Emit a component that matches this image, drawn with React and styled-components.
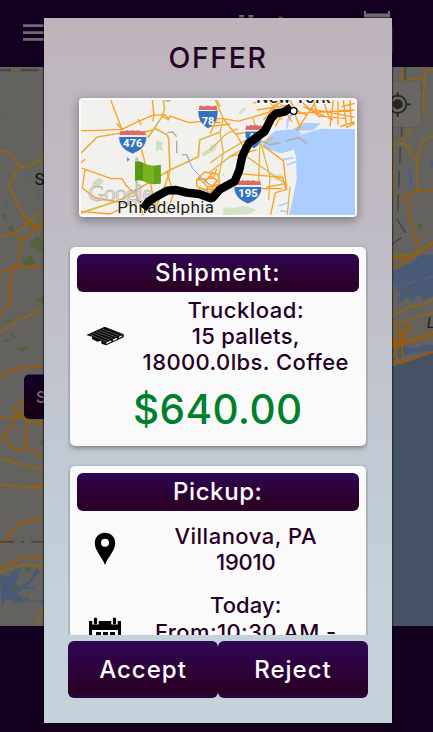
import React from "react";
import styled, { createGlobalStyle } from "styled-components";

const GlobalStyle = createGlobalStyle`
  * { box-sizing: border-box; }
  html, body { margin: 0; padding: 0; }
  body { width: 433px; height: 732px; overflow: hidden; background: #130020; }
`;

const Screen = styled.main`
  position: relative;
  width: 433px;
  height: 732px;
  overflow: hidden;
  display: flex;
  flex-direction: column;
  background: #130020;
  font-family: Inter, "Open Sans", sans-serif;
`;

const TopBar = styled.header`
  flex: 0 0 67px;
  background: #130021;
  border-bottom: 1px solid #0e0018;
`;

const BackMap = styled.section`
  flex: 0 0 559px;
  background: #64625f;
`;

const BottomBar = styled.footer`
  flex: 1;
  background: linear-gradient(#130020, #13001c);
`;

const Drawing = styled.svg`
  display: block;
`;

const Modal = styled.section`
  position: absolute;
  left: 44px;
  top: 18px;
  width: 348px;
  height: 705px;
  padding: 0 24px;
  display: flex;
  flex-direction: column;
  background: linear-gradient(#beb4bc, #c0bdc6 35%, #c1cad3 65%, #c3d3d9 85%, #c3d3d9);
  box-shadow: 0 0 1px 1px rgba(0, 0, 0, 0.45);
`;

const Title = styled.h1`
  margin: 0;
  height: 80px;
  line-height: 80px;
  text-align: center;
  font-size: 28.5px;
  font-weight: 500;
  letter-spacing: ${(p) => p.$track}px;
  color: #260026;
`;

const MapCard = styled.div`
  flex: none;
  align-self: center;
  width: 278px;
  height: 119px;
  padding: 2px;
  background: #fafafa;
  border-radius: 4px;
  box-shadow: 0 3px 10px 1px rgba(0, 0, 0, 0.32);
`;

const ScrollArea = styled.div`
  flex: none;
  height: 418px;
  margin-bottom: 5.5px;
  padding: 30px 2.5px 0 2px;
  overflow: hidden;
  display: flex;
  flex-direction: column;
  gap: 19.5px;
`;

const Card = styled.article`
  flex: 0 0 ${(p) => p.$height}px;
  padding: 7px;
  border-radius: 5px;
  background: #fafafa;
  box-shadow: 0 2px 5px rgba(0, 0, 0, 0.36);
`;

const CardTitle = styled.h2`
  margin: 0;
  height: 38px;
  line-height: 38px;
  border-radius: 6px;
  text-align: center;
  font-size: 24px;
  font-weight: 500;
  letter-spacing: ${(p) => p.$track}px;
  color: #fff;
  background: linear-gradient(#2e0553, #2c0024 88%, #2b0435);
`;

const InfoRow = styled.div`
  display: grid;
  grid-template-columns: 56px 1fr;
  align-items: center;
  margin-top: ${(p) => p.$gap}px;
`;

const IconCell = styled.div`
  display: flex;
  justify-content: center;
  padding-top: ${(p) => p.$drop || 0}px;
`;

const Lines = styled.div`
  display: flex;
  flex-direction: column;
  align-items: center;
  align-self: start;
`;

const Line = styled.span`
  height: 26.4px;
  line-height: 26.4px;
  white-space: nowrap;
  font-size: 22px;
  font-weight: 450;
  letter-spacing: ${(p) => p.$track || 0}px;
  color: #260026;
`;

const Price = styled.div`
  margin-top: 5px;
  height: 58px;
  line-height: 58px;
  text-align: center;
  font-size: 40.5px;
  font-weight: 500;
  letter-spacing: ${(p) => p.$track}px;
  color: #00802b;
`;

const Actions = styled.div`
  display: grid;
  grid-template-columns: 1fr 1fr;
  height: 57px;
`;

const ActionButton = styled.button`
  border: 0;
  padding: 0;
  border-radius: 6px;
  font: 500 24px Inter, sans-serif;
  letter-spacing: ${(p) => p.$track}px;
  color: #fff;
  background: linear-gradient(#2f0655, #2b0024 90%, #2a0640);
`;

const HeaderArt = () => (
  <Drawing width="433" height="66">
    <path d="M23 25.6h26M23 32.6h26M23 39.4h26" stroke="#706c73" strokeWidth="2.6" />
    <text x="197" y="39" fontSize="32" fontWeight="700" fill="#706c73" letterSpacing="0.6">pallet</text>
    <path d="M364 11h2v2.5h22V11h2v50h-26z" fill="#706c73" />
    <path d="M392.500 26v28" stroke="#403545" />
  </Drawing>
);

const Y = "#87671d";
const O = "#99590b";

const RegionMap = () => (
  <Drawing width="433" height="559" viewBox="0 0 433 559">
    <g transform="translate(0 -7) scale(.33333)" fill="none" strokeWidth="6">
      <path d="M0 31h40M62 31h54" stroke="#454442" />
      <path d="M36 20v13" stroke={Y} />
      <path d="M0 160l8 3-4 6zM11 425l15-3-5 14z" fill="#485d87" />
      <path d="M78 340l10 2-2 30 12 12M104 376l14 36M112 374l6 38" stroke="#525d75" strokeWidth="3" />
      <path d="M20 390l20-22M40 330l35-10" stroke="#585d68" strokeWidth="2" />
      <path d="M5 464l15-4v25zM20 500l18-4 10 24-20-8zM90 550l20-22 22 14v42l-22-10zM70 598l20-14 16 20-10 18-28-8zM108 718l24-12v26zM14 780l24-4-12 14zM10 842l14-6 8 8-20 4zM34 814l14 20-14-2zM50 866l38-12-26 22z" fill="#53613f" />
      <path d="M0 275l12-3 34 20 4 15 10 17-14 12-4 18-18 20 50 99 42 30 16-10M60 324l70-24V283M0 532l38-12 32-16 24-28 38-22M0 818l62-44 8 2 62-34" stroke={Y} />
      <path d="M130 486l-40 36-30 24-5 60-22 22-33 10M32 630l4 22-12 18 8 30-6 12 6 18-32 32M32 626l44-6 54 2M38 520l14 12 26 1M70 475l44 32M130 520v12" stroke={O} />
    </g>
    <g transform="translate(0 273) scale(.33333)" fill="none" strokeWidth="6">
      <path d="M50 28l38-14-20 25zM70 150l12-8v18zM118 312l14-22v28z" fill="#53613f" />
      <path d="M0 108l54-24 78-3M80 168l-34 34-4 12 12 10 12-14 16-32M0 298l10-3 46-74 28 24-10 72 56 32M10 295l14 12 22 22 28-3M82 242l50 8M24 604v-14l30-38 78-20M0 684l72-33h60M80 443l50-8" stroke={O} />
      <path d="M0 233l56-2 76 26M0 354l66 20 46 10 20 14M0 434l80 8 42 2 10-4M0 698l68-25 62 6M0 613l22-8M108 858l22-48" stroke={Y} />
      <path d="M0 605h42M62 605h10M94 605h38" stroke="#484745" />
      <path d="M0 706l28 2 10-14 24-10-6 24-10 24 12 8 32-20 20-36 10 8-22 30-18 16 22 4-2 6-30-2-20 16 20 16 12-8 10 12 48-4-14 10-16-8-18 8-16-6-24 6-24-10-14 6-10 14z" fill="#485a76" />
      <path d="M42 738l12 10-12 10zM74 682h22l-8 16-14-6z" fill="#53613f" />
    </g>
    <g transform="translate(370 -7) scale(.33333)" fill="none" strokeWidth="6">
      <path d="M154 100l-16-20 22 4z" fill="#53613f" />
      <path d="M95 20l2 43 28-7h14l15 3 16-26 19-6M174 24l-10 12-5 100 5 14-65 87 10 18 13 14v16l20 12-3 58 8 22-7 16M143 296l6-26 12-28 28-14M66 252h42M66 230l3 170M66 250l-1 50" stroke={Y} />
      <path d="M66 414h44l18-18 60-6M114 412v48l26 80-2 40-72 54M66 600l24-8 30 4 70-46" stroke={O} />
      <path d="M66 592l24-8 38 4 60-42" stroke={Y} />
      <path d="M115 330l10 4v54l-6-20zM176 290l13 36v-20z" fill="#485d87" />
      <path d="M66 632l62-26 22-22h39v125l-28 10-14-16-24 20-14-16-8 16-18 8 10-30-14-10-6-14z" fill="#485a76" />
      <path d="M66 682l123-32" stroke="#58616c" strokeDasharray="35 12" />
      <path d="M106 10v65M95 190v40M91 260l-8 200M80 476l28 44M66 553l28-20" stroke="#474643" strokeWidth="5" strokeDasharray="50 22" />
      <path d="M140 495l20-5-10 20zM106 696l14-8-2 22z" fill="#53613f" />
      <path d="M66 768l52-28 40-4 31-18M66 794l100-30 23-6M66 858l123-42" stroke={Y} />
      <rect x="40" y="64" width="114" height="138" rx="6" fill="#6c6a67" opacity=".72" stroke="#575552" strokeWidth="2" />
      <circle cx="83" cy="133" r="26" stroke="#252525" strokeWidth="5" />
      <circle cx="83" cy="133" r="15" fill="#252525" />
      <path d="M83 97v14M83 155v16M108 133h14" stroke="#252525" strokeWidth="5" />
    </g>
    <g transform="translate(370 273) scale(.33333)" fill="none" strokeWidth="6">
      <path d="M66 80l50-20 73-24v823H66z" fill="#445264" />
      <path d="M66 26l60-14 63 2v18l-73 10-50 22z" fill="#485a76" />
      <path d="M100 20l40-14 30 2-24 16z" fill="#64625f" />
      <path d="M66 66l30 2 93-32M66 10l50-4 73-20M66-20l18 90M90-40l10 106M66 14l60-54M70-50l38 70M66 50l26-40 30-66" stroke={O} />
      <path d="M120 603l69-55" stroke="#4c5766" strokeWidth="2" />
    </g>
    <text x="34.500" y="118" fontFamily="Roboto" fontSize="17" fill="#111">S</text>
    <text x="427" y="261" fontFamily="Roboto" fontStyle="italic" fontSize="14" fill="#1c1b1a">L</text>
    <defs>
      <linearGradient id="dim" x2="0" y2="1">
        <stop stopColor="#140026" /><stop offset="1" stopColor="#160010" />
      </linearGradient>
    </defs>
    <rect x="24" y="307.500" width="60" height="44.500" rx="5" fill="url(#dim)" />
    <text x="36" y="336" fontFamily="Inter" fontSize="16" fontWeight="500" fill="#77717a">S</text>
  </Drawing>
);

const my = "#dfb544";
const mo = "#ff9c22";

const Shield = ({ x, y, label }) => (
  <g transform={`translate(${x} ${y})`}>
    <path d="M-42-14Q-44 22 0 39Q44 22 42-14z" fill="#3574bd" stroke="#fff" strokeWidth="2" />
    <path d="M-40-17l4-14q12 5 20-2 8 5 16 0 8 5 16 0 8 7 20 2l4 14z" fill="#dc6a66" />
    <path d="M-42-15H42" stroke="#fff" strokeWidth="4" />
    <text y="17" textAnchor="middle" fontFamily="Roboto" fontWeight="700" fontSize="34" fill="#fff">{label}</text>
  </g>
);

const RouteMap = () => (
  <Drawing width="274" height="115" viewBox="0 0 274 115">
    <rect width="274" height="115" fill="#f3f1ed" />
    <g transform="translate(-11 -10) scale(.33333)" fill="none" strokeWidth="5">
      <path d="M70 275l16-12 16 10-16 18-20-4zM258 152l20 6 6-8-10 20 8 12-14-4-10 6zM396 190l46-32-6 22-36 20z" fill="#cddfb9" />
      <path d="M170 202l10 6-8 8z" fill="#5c93ee" />
      <path d="M30 192l52-51 70-12 46 4 60-16 34 18 4 12 4 95-15 45-25 60M30 370l120-40 150-90 85-40 4-50 61-24M280 30l4 26-8 22 22 12M200 130l36 10 40-60M440 30l10 20M140 100l18 20" stroke={my} />
      <path d="M122 30l34 88-90 4H30M156 118l36-18 55-24 37-2 12 12 4-8 56 20 40-4 56 4M247 30l5 46-4 18M204 87l10 18M30 220l16-12M35 234l10 4-8 56 40 30 110 20M45 238l79 28h32l12 20 32 30 20 60M204 132l12 52 24 90 20 90M380 270l24-24 40 6 6 40-30 16-40-20v-18l50-6 10-28M384 262l30 30 34-10M290 242l20 70-20 60M30 364l90 8 60-30M400 280l30-34M386 296l64 4" stroke={mo} strokeWidth="4" />
      <path d="M284 30l10 4 10-6M292 128l16-2 12 14M320 152v38M336 194h14l10 24M385 256l36 30" stroke="#aaa" strokeWidth="4" />
      <path d="M360 218l8 18 18 18M412 290v20" stroke="#7da6e8" strokeWidth="3" />
    </g>
    <g transform="translate(129 -10) scale(.33333)" fill="none" strokeWidth="5">
      <path d="M85 66l18-14 7 8-22 14zM0 166l20-6-4 20-16 6zM34 256l6-8 6 12zM40 352l30 2 30-6 40 10-20 14-80 4z" fill="#d5e2c5" />
      <path d="M190 260q12-14 28-6l-4 20-24-4z" fill="#dedbd0" />
      <path d="M440 118l-104-2-62 14-16-12-62 4-20 18-18 24 2 10 54 16 38-10 6 28 2 60-12 60-12 50h208z" fill="#abcdff" />
      <path d="M228 132l8-36 14-22-8-4-12 20zM248 118l34-20 50 2-20 20-60 4z" fill="#abcdff" />
      <path d="M260 136l74-22-50 18zM220 200l32-12 8 10-30 8zM225 222l34-14v10zM206 346l26-10 10 18-20-4zM204 360l30 2v12z" fill="#f3f1ed" />
      <path d="M220 208l30-4M230 225l28-10M206 348l28-10M210 362l24 4" stroke="#abcdff" />
      <path d="M16 30l24 56-10 40 10 60-16 90M0 220l40-30 120-70 26-30M0 180l48-48 36-16M0 246l60-46 60-36 40-8 30-14M128 84l22 60-4 130M176 30l40 60M150 150l30 110-4 70M240 290l-8 84M0 50l24 14M110 200l116 80M0 290l30-20" stroke={my} strokeWidth="4" />
      <path d="M0 86h40l44 8 90-26 34-38M40 86l36 46 80-10M0 110l60-8M20 88l-20 44M78 132l30 52M78 250l140 12 10 36M160 168l60 44 10 86-34 10-14 66M228 280l-60 12M0 310l20-40-20-12M0 290h30M76 270l80 26h60M130 40l20-8M60 200l80-20" stroke={mo} strokeWidth="4" />
      <path d="M140 60l90-14 60 30-30 46M160 90l50-54 36 60M240 30l20 40 174-10M250 60l22 56M290 76l30-44M310 30l14 48 84 8M340 30l16 50M370 30l-10 80M400 30l10 82 24-12M420 30l4 72M280 50l90 40M300 56l134 26M390 110l44-14M196 110l20-40M270 32l60 50M384 34v70M434 40l-40 10" stroke={mo} strokeWidth="4" />
      <path d="M156 154l26 10 30-6M226 153l40-10 26 18" stroke="#b4afa7" />
    </g>
    <g transform="translate(-11 -10) scale(.33333)">
      <Shield x={188} y={153} label="476" />
      <g transform="translate(414 77) scale(.7 .98)"><path d="M-42-14Q-44 22 0 39Q44 22 42-14z" fill="#3574bd" /><path d="M-40-17l4-14 20 3 16-3 16 3 20-3 4 14z" fill="#dc6a66" /></g>
      <text x="414" y="104" textAnchor="middle" fontFamily="Roboto" fontWeight="700" fontSize="33" fill="#fff">78</text>
      <Shield x={534} y={303} label="195" />
      <g transform="translate(552 137) scale(.65 1)"><Shield x={0} y={0} label="95" /></g>
      <text x="54" y="333" fontFamily="Liberation Serif" fontSize="70" fill="#d8d6d2" fillOpacity=".65" stroke="#aaa7a3" strokeWidth="1.500" textLength="194">Google</text>
      <text x="142" y="368" fontFamily="Roboto" fontWeight="400" fontSize="51" fill="#222" stroke="#fff" strokeWidth="3" paintOrder="stroke" textLength="290">Philadelphia</text>
      <text x="559" y="40" fontFamily="Roboto" fontWeight="500" fontSize="51" fill="#222" stroke="#fff" strokeWidth="5" paintOrder="stroke" textLength="222">New York</text>
      <path d="M220 356L236 334 262 318 292 302 318 300 350 308 388 312 425 326 450 298 494 274 508 240 517 198 536 160 584 124 604 84 618 70 642 66 664 52" fill="none" stroke="#000" strokeWidth="25" strokeLinejoin="bevel" />
      <circle cx="671" cy="63" r="10" fill="#fff" stroke="#000" strokeWidth="4" />
      <path d="M196 204q5-6 9 0l-2 128h-6z" fill="#b6b6b4" opacity=".8" />
      <path d="M195 216q12-3 24 2 26 14 53 6v56q-25 8-48-5-14-7-29-3z" fill="#78b31f" />
      <path d="M195 216q12-3 24 2v55q-12-5-24-1z" fill="#5d9615" />
      <path d="M252 227q10 0 20-3v56q-10 3-20 1z" fill="#65a016" />
    </g>
  </Drawing>
);

const PalletIcon = () => (
  <Drawing width="38" height="20" viewBox="79 260 114 60">
    <path d="M80 287l55-25 57 23v9l-52 24-15-5v-9l-12 3-16-8v-7l-17-5z" fill="#080808" />
    <path d="M91 285l50 22M100 281l51 21M109 277l52 20M118 273l52 20M127 269l52 20" stroke="#a0a0a0" strokeWidth="1.500" />
    <path d="M140 312l15-7M160 303l12-6M178 294l9-4" stroke="#fafafa" strokeWidth="4" />
  </Drawing>
);

const PinIcon = () => (
  <Drawing width="22" height="34" viewBox="0 0 22 34">
    <path d="M11 .7C5 .7.800 5.200.800 11c0 8 7.500 14 10.200 22C13.700 25 21.200 19 21.200 11 21.200 5.200 17 .7 11 .7z" fill="#000" />
    <circle cx="11" cy="10.800" r="4" fill="#fafafa" />
  </Drawing>
);

const CalendarIcon = () => (
  <Drawing width="32" height="34" viewBox="0 0 32 34">
    <path d="M0 4h32v30H0z" />
    <path d="M3 13h26v18H3z" fill="#fafafa" />
    <path d="M6.500 0v7.500M25.500 0v7.500" stroke="#fafafa" strokeWidth="6.500" />
    <path d="M6.500 2v4M25.500 2v4" stroke="#000" strokeWidth="3.200" strokeLinecap="round" />
    <path d="M7 17h19M7 22.500h19M7 28h19" stroke="#000" strokeWidth="4" strokeDasharray="5 2" />
  </Drawing>
);

export default function App() {
  return (
    <Screen>
      <GlobalStyle />
      <TopBar><HeaderArt /></TopBar>
      <BackMap><RegionMap /></BackMap>
      <BottomBar />
      <Modal>
        <Title $track={1.6}>OFFER</Title>
        <MapCard><RouteMap /></MapCard>
        <ScrollArea>
          <Card $height={199}>
            <CardTitle $track={1.05}>Shipment:</CardTitle>
            <InfoRow $gap={4.5}>
              <IconCell><PalletIcon /></IconCell>
              <Lines>
                <Line $track={0.5}>Truckload:</Line>
                <Line $track={0.3}>15 pallets,</Line>
                <Line $track={0.4}>18000.0lbs. Coffee</Line>
              </Lines>
            </InfoRow>
            <Price $track={0.4}>$640.00</Price>
          </Card>
          <Card $height={260}>
            <CardTitle $track={0.6}>Pickup:</CardTitle>
            <InfoRow $gap={12}>
              <IconCell><PinIcon /></IconCell>
              <Lines>
                <Line $track={0.5}>Villanova, PA</Line>
                <Line $track={-0.2}>19010</Line>
              </Lines>
            </InfoRow>
            <InfoRow $gap={17}>
              <IconCell $drop={25}><CalendarIcon /></IconCell>
              <Lines>
                <Line $track={0.1}>Today:</Line>
                <Line $track={0.4}>From:10:30 AM -</Line>
              </Lines>
            </InfoRow>
          </Card>
        </ScrollArea>
        <Actions>
          <ActionButton $track={1}>Accept</ActionButton>
          <ActionButton $track={1}>Reject</ActionButton>
        </Actions>
      </Modal>
    </Screen>
  );
}
